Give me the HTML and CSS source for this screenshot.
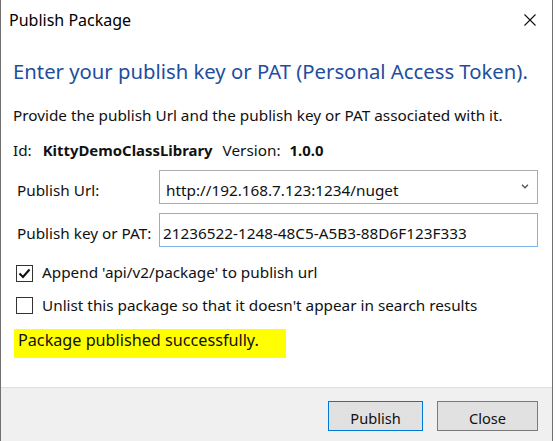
FILE: index.html
```html
<!DOCTYPE html>
<html>
<head>
<meta charset="utf-8">
<title>Publish Package</title>
<link rel="stylesheet" href="styles.css">
</head>
<body>
<div class="window">
  <div class="titlebar">
    <span class="title">Publish Package</span>
    <button class="close-x" aria-label="Close">
      <svg width="12" height="12" viewBox="0 0 12 12"><path d="M0.5 0.5 L11.5 11.5 M11.5 0.5 L0.5 11.5" stroke="#111" stroke-width="1.1" fill="none"/></svg>
    </button>
  </div>
  <div class="content">
    <h1 class="instruction">Enter your publish key or PAT (Personal Access Token).</h1>
    <p class="desc">Provide the publish Url and the publish key or PAT associated with it.</p>
    <p class="ident"><span>Id:</span><b class="id-val">KittyDemoClassLibrary</b><span class="ver-label">Version:</span><b class="ver-val">1.0.0</b></p>
    <div class="form">
      <label class="label">Publish Url:</label>
      <div class="combo">
        <span class="combo-text">http://192.168.7.123:1234/nuget</span>
        <svg class="chev" width="8" height="5" viewBox="0 0 8 5"><path d="M1 0.7 L4 3.8 L7 0.7" stroke="#555" stroke-width="1.3" fill="none"/></svg>
      </div>
      <label class="label">Publish key or PAT:</label>
      <div class="textbox">21236522-1248-48C5-A5B3-88D6F123F333</div>
    </div>
    <div class="check-row first">
      <span class="checkbox">
        <svg width="15" height="15" viewBox="0 0 15 15"><path d="M2.5 7.5 L6 11 L12.5 3.5" stroke="#111" stroke-width="2.1" fill="none"/></svg>
      </span>
      <span class="check-label">Append 'api/v2/package' to publish url</span>
    </div>
    <div class="check-row second">
      <span class="checkbox"></span>
      <span class="check-label">Unlist this package so that it doesn't appear in search results</span>
    </div>
    <div class="status"><span class="highlight">Package published successfully.</span></div>
  </div>
  <div class="footer">
    <button class="btn btn-default">Publish</button>
    <button class="btn btn-close">Close</button>
  </div>
</div>
</body>
</html>
```
FILE: styles.css
```css
html, body {
  margin: 0;
  padding: 0;
  background: #ffffff;
}
body {
  font-family: "Noto Sans", "Open Sans", sans-serif;
  font-size: 15.3px;
  color: #111;
}
.window {
  width: 553px;
  height: 441px;
  box-sizing: border-box;
  border-left: 1px solid #707070;
  border-right: 1px solid #707070;
  display: flex;
  flex-direction: column;
  background: #fff;
}
.titlebar {
  height: 40px;
  box-sizing: border-box;
  padding: 10px 0 0 8px;
  display: flex;
  justify-content: space-between;
  align-items: flex-start;
}
.title {
  font-size: 16px;
  line-height: 20px;
  color: #000;
}
.close-x {
  border: 0;
  background: none;
  padding: 0;
  margin: 4px 16px 0 0;
  width: 12px;
  height: 12px;
  display: block;
}
.close-x svg { display: block; }
.content {
  flex: 1;
  padding: 0 12px;
}
.instruction {
  margin: 17.6px 0 0 0;
  font-size: 20.3px;
  font-weight: normal;
  line-height: 26px;
  color: #1f4e9f;
  white-space: nowrap;
}
.desc {
  margin: 21px 0 0 0;
  line-height: 20px;
  white-space: nowrap;
}
.ident {
  margin: 15px 0 0 0;
  line-height: 20px;
  white-space: nowrap;
}
.ident b {
  font-weight: 700;
  font-size: 14.9px;
}
.id-val { margin-left: 11px; }
.ver-label { margin-left: 10px; }
.ver-val { margin-left: 9px; }
.form {
  margin-top: 10.4px;
  display: grid;
  grid-template-columns: 146px 379px;
  grid-auto-rows: 34px;
  row-gap: 9px;
}
.label {
  padding: 9.6px 0 0 4px;
  line-height: 20px;
  white-space: nowrap;
}
.label:nth-of-type(2) {
  padding-top: 10px;
}
.combo, .textbox {
  box-sizing: border-box;
  height: 34px;
  line-height: 20px;
  background: #fff;
  white-space: nowrap;
}
.combo {
  border: 1px solid #acacac;
  padding: 8.6px 0 0 6px;
  display: flex;
  justify-content: space-between;
  align-items: flex-start;
}
.chev {
  display: block;
  margin: 4.5px 8px 0 0;
}
.textbox {
  border: 1px solid #7eb4ea;
  padding: 9px 0 0 3px;
}
.check-row {
  display: flex;
  align-items: flex-start;
  height: 20px;
}
.check-row.first { margin-top: 14.6px; }
.check-row.second { margin-top: 13.4px; }
.checkbox {
  width: 17px;
  height: 17px;
  box-sizing: border-box;
  border: 1px solid #333;
  background: #fff;
  margin: 3.4px 9px 0 3px;
  display: flex;
  align-items: center;
  justify-content: center;
}
.check-row.second .checkbox { margin-top: 2px; }
.checkbox svg { display: block; }
.check-label {
  line-height: 20px;
  white-space: nowrap;
}
.status {
  margin-top: 14px;
}
.highlight {
  display: inline-block;
  background: #ffff00;
  font-size: 16.2px;
  padding: 1.4px 27px 7.6px 4px;
  margin-left: 1px;
  line-height: 20px;
  color: #111;
}
.footer {
  height: 54px;
  box-sizing: border-box;
  border-top: 1px solid #dfdfdf;
  background: #f0f0f0;
  padding: 13px 14px 0 0;
  display: flex;
  justify-content: flex-end;
  align-items: flex-start;
  gap: 14px;
}
.btn {
  height: 30px;
  box-sizing: border-box;
  font-family: "Noto Sans", "Open Sans", sans-serif;
  font-size: 14.6px;
  line-height: 20px;
  color: #111;
  background: #e1e1e1;
  padding: 3px 0 0 0;
  margin: 0;
}
.btn-default {
  width: 95px;
  border: 1px solid #0078d7;
}
.btn-close {
  width: 101px;
  border: 1px solid #7a7a7a;
}
```
